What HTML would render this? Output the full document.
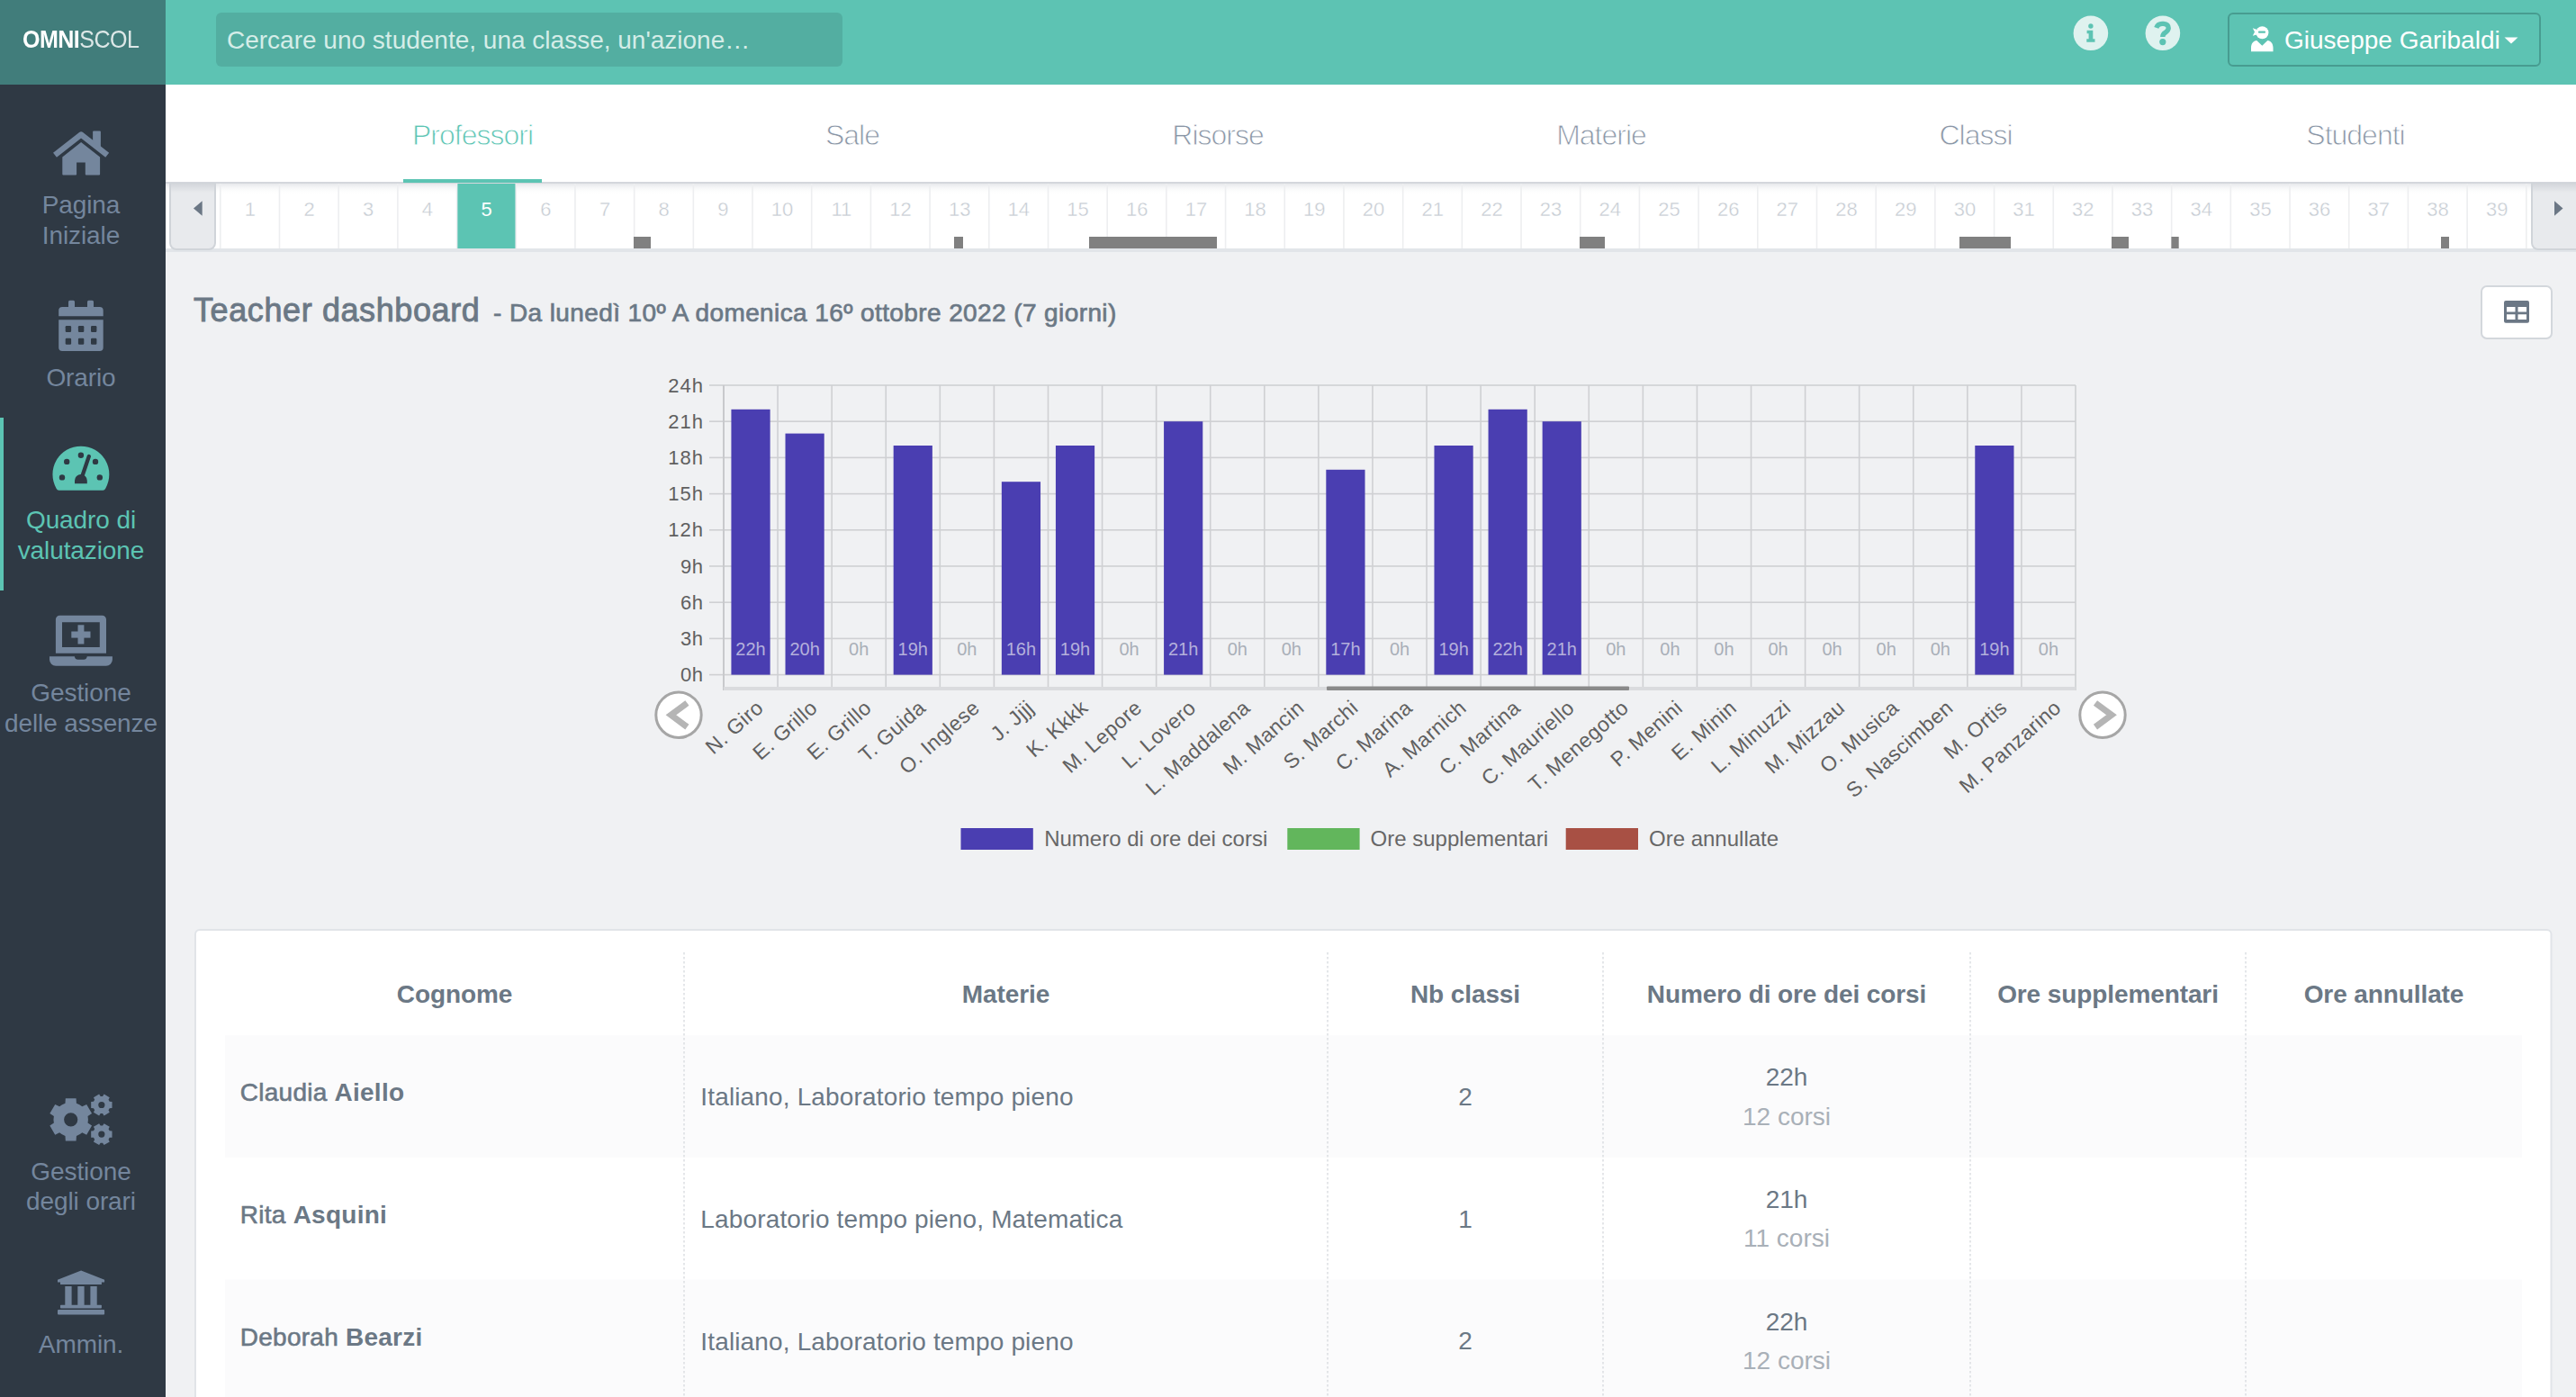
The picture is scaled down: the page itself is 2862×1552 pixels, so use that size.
<!DOCTYPE html><html><head><meta charset="utf-8"><style>
*{margin:0;padding:0;box-sizing:border-box}
html,body{width:2862px;height:1552px;overflow:hidden;background:#F0F1F3;font-family:"Liberation Sans",sans-serif}
.a{position:absolute}
.t{position:absolute;white-space:nowrap}
#sidebar{position:absolute;left:0;top:0;width:184px;height:1552px;background:#2F3944}
#logo{position:absolute;left:0;top:0;width:184px;height:94px;background:#417D7B}
#header{position:absolute;left:184px;top:0;width:2678px;height:94px;background:#5DC3B3}
#search{position:absolute;left:240px;top:14px;width:696px;height:60px;background:#53AEA1;border-radius:6px}
#userbtn{position:absolute;left:2475px;top:14px;width:348px;height:60px;border:2px solid #479C90;border-radius:6px}
#tabs{position:absolute;left:184px;top:94px;width:2678px;height:110px;background:#fff;border-bottom:2px solid #D4D7DC}
#weeks{position:absolute;left:184px;top:204px;width:2678px;height:72px;background:#fff}
#weeksb{position:absolute;left:184px;top:276px;width:2678px;height:4px;background:#E2E5E9}
svg{position:absolute;left:0;top:0}
</style></head><body><div id="sidebar"></div><div id="logo"></div><div id="header"></div><div id="search"></div><div id="userbtn"></div><div id="tabs"></div><div id="weeks"></div><div id="weeksb"></div><div class="t" style="left:25px;top:30px;font-size:28px;line-height:28px;color:#fff;letter-spacing:-0.6px;transform:scaleX(0.895);transform-origin:0 0;filter:blur(0.5px)"><b>OMNI</b><span style="color:rgba(255,255,255,0.82)">SCOL</span></div><div class="t " style="left:252.0px;top:30.6px;font-size:28px;line-height:28px;color:#D5EDE8;">Cercare uno studente, una classe, un'azione&hellip;</div><div class="t " style="left:2538.0px;top:30.8px;font-size:28px;line-height:28px;color:#fff;">Giuseppe Garibaldi</div><div class="t " style="left:90.0px;top:213.9px;font-size:28px;line-height:28px;color:#74869D;letter-spacing:-0.1px;transform:translateX(-50%);">Pagina</div><div class="t " style="left:90.0px;top:248.1px;font-size:28px;line-height:28px;color:#74869D;letter-spacing:-0.1px;transform:translateX(-50%);">Iniziale</div><div class="t " style="left:90.0px;top:406.3px;font-size:28px;line-height:28px;color:#74869D;letter-spacing:-0.1px;transform:translateX(-50%);">Orario</div><div class="t " style="left:90.0px;top:564.1px;font-size:28px;line-height:28px;color:#5CC4B3;letter-spacing:-0.1px;transform:translateX(-50%);">Quadro di</div><div class="t " style="left:90.0px;top:598.1px;font-size:28px;line-height:28px;color:#5CC4B3;letter-spacing:-0.1px;transform:translateX(-50%);">valutazione</div><div class="t " style="left:90.0px;top:756.4px;font-size:28px;line-height:28px;color:#74869D;letter-spacing:-0.1px;transform:translateX(-50%);">Gestione</div><div class="t " style="left:90.0px;top:789.9px;font-size:28px;line-height:28px;color:#74869D;letter-spacing:-0.1px;transform:translateX(-50%);">delle assenze</div><div class="t " style="left:90.0px;top:1287.6px;font-size:28px;line-height:28px;color:#74869D;letter-spacing:-0.1px;transform:translateX(-50%);">Gestione</div><div class="t " style="left:90.0px;top:1320.9px;font-size:28px;line-height:28px;color:#74869D;letter-spacing:-0.1px;transform:translateX(-50%);">degli orari</div><div class="t " style="left:90.0px;top:1479.9px;font-size:28px;line-height:28px;color:#74869D;letter-spacing:-0.1px;transform:translateX(-50%);">Ammin.</div><div class="t " style="left:525.0px;top:134.1px;font-size:32px;line-height:32px;color:#5CC4B3;letter-spacing:-1px;transform:translateX(-50%);-webkit-text-stroke:0.9px #fff;">Professori</div><div class="t " style="left:947.0px;top:134.1px;font-size:32px;line-height:32px;color:#8A96A6;letter-spacing:-1px;transform:translateX(-50%);-webkit-text-stroke:0.9px #fff;">Sale</div><div class="t " style="left:1353.0px;top:134.1px;font-size:32px;line-height:32px;color:#8A96A6;letter-spacing:-1px;transform:translateX(-50%);-webkit-text-stroke:0.9px #fff;">Risorse</div><div class="t " style="left:1779.0px;top:134.1px;font-size:32px;line-height:32px;color:#8A96A6;letter-spacing:-1px;transform:translateX(-50%);-webkit-text-stroke:0.9px #fff;">Materie</div><div class="t " style="left:2195.0px;top:134.1px;font-size:32px;line-height:32px;color:#8A96A6;letter-spacing:-1px;transform:translateX(-50%);-webkit-text-stroke:0.9px #fff;">Classi</div><div class="t " style="left:2617.0px;top:134.1px;font-size:32px;line-height:32px;color:#8A96A6;letter-spacing:-1px;transform:translateX(-50%);-webkit-text-stroke:0.9px #fff;">Studenti</div><svg width="2862" height="1552" viewBox="0 0 2862 1552"><rect x="0" y="464" width="4" height="192" fill="#5CC4B3"/><polyline points="61,172.3 90.1,149.5 119.2,172.3" fill="none" stroke="#74869D" stroke-width="6.4" stroke-linejoin="round"/><path d="M104.1,145.5 h6.8 a1,1 0 0 1 1,1 V163.5 L103.1,157.5 V146.5 a1,1 0 0 1 1,-1 z" fill="#74869D"/><path fill-rule="evenodd" d="M90.1,158 L111.1,174.6 V193.6 a1,1 0 0 1 -1,1 H95.8 a1,1 0 0 1 -1,-1 V180.6 H85.1 V193.6 a1,1 0 0 1 -1,1 H70.3 a1,1 0 0 1 -1,-1 V174.6 Z" fill="#74869D"/><rect x="76" y="333.8" width="7" height="12" rx="1.5" fill="#74869D"/><rect x="97" y="333.8" width="7" height="12" rx="1.5" fill="#74869D"/><path d="M65.2,351.3 V345 a4,4 0 0 1 4,-4 H110.7 a4,4 0 0 1 4,4 V351.3 Z" fill="#74869D"/><path d="M65.2,355.2 H114.7 V386 a4,4 0 0 1 -4,4 H69.2 a4,4 0 0 1 -4,-4 Z" fill="#74869D"/><rect x="72.7" y="362" width="6.4" height="6.9" rx="1.2" fill="#2F3944"/><rect x="72.7" y="375.8" width="6.4" height="6.9" rx="1.2" fill="#2F3944"/><rect x="86.9" y="362" width="6.4" height="6.9" rx="1.2" fill="#2F3944"/><rect x="86.9" y="375.8" width="6.4" height="6.9" rx="1.2" fill="#2F3944"/><rect x="101" y="362" width="6.4" height="6.9" rx="1.2" fill="#2F3944"/><rect x="101" y="375.8" width="6.4" height="6.9" rx="1.2" fill="#2F3944"/><path d="M65.5,544.7 Q63.5,544.7 62.6,542.7 A31.45,31.45 0 1 1 117.2,542.7 Q116.3,544.7 114.3,544.7 Z" fill="#5CC4B3"/><circle cx="74.2" cy="512.9" r="3.2" fill="#2F3944"/><circle cx="89.9" cy="505.8" r="3.2" fill="#2F3944"/><circle cx="106" cy="512.9" r="3.2" fill="#2F3944"/><circle cx="69" cy="530.4" r="3.2" fill="#2F3944"/><circle cx="110.8" cy="530.4" r="3.2" fill="#2F3944"/><line x1="90" y1="533" x2="98.8" y2="507" stroke="#2F3944" stroke-width="4.3" stroke-linecap="round"/><path d="M83,537.2 V534 A6.9,6.9 0 0 1 96.8,534 V537.2 Z" fill="#2F3944"/><path fill-rule="evenodd" d="M61.9,725.8 V688.3 a4.6,4.6 0 0 1 4.6,-4.6 H113.4 a4.6,4.6 0 0 1 4.6,4.6 V725.8 Z M69,691.2 V718.9 H110.8 V691.2 Z" fill="#74869D"/><rect x="86.5" y="694.3" width="6.9" height="21.2" fill="#74869D"/><rect x="79.3" y="701.5" width="21.2" height="7.1" fill="#74869D"/><path d="M55,729.2 H82.8 Q83.5,732.7 86.5,732.7 H93 Q96,732.7 96.8,729.2 H124.9 V732.8 a7,7 0 0 1 -7,7 H62 a7,7 0 0 1 -7,-7 Z" fill="#74869D"/><path fill-rule="evenodd" d="M84.92,1225.64 L84.58,1220.22 L72.82,1220.22 L72.48,1225.64 A19.20,19.20 0 0 0 66.08,1229.33 L61.22,1226.92 L55.34,1237.10 L59.86,1240.10 A19.20,19.20 0 0 0 59.86,1247.50 L55.34,1250.50 L61.22,1260.68 L66.08,1258.27 A19.20,19.20 0 0 0 72.48,1261.96 L72.82,1267.38 L84.58,1267.38 L84.92,1261.96 A19.20,19.20 0 0 0 91.32,1258.27 L96.18,1260.68 L102.06,1250.50 L97.54,1247.50 A19.20,19.20 0 0 0 97.54,1240.10 L102.06,1237.10 L96.18,1226.92 L91.32,1229.33 A19.20,19.20 0 0 0 84.92,1225.64 Z M86.30,1243.80 A7.60,7.60 0 1 0 71.10,1243.80 A7.60,7.60 0 1 0 86.30,1243.80 Z" fill="#74869D"/><path fill-rule="evenodd" d="M121.69,1231.24 L124.52,1231.07 L124.52,1223.93 L121.69,1223.76 A9.60,9.60 0 0 0 120.51,1221.72 L121.77,1219.18 L115.59,1215.61 L114.03,1217.97 A9.60,9.60 0 0 0 111.67,1217.97 L110.11,1215.61 L103.93,1219.18 L105.19,1221.72 A9.60,9.60 0 0 0 104.01,1223.76 L101.18,1223.93 L101.18,1231.07 L104.01,1231.24 A9.60,9.60 0 0 0 105.19,1233.28 L103.93,1235.82 L110.11,1239.39 L111.67,1237.03 A9.60,9.60 0 0 0 114.03,1237.03 L115.59,1239.39 L121.77,1235.82 L120.51,1233.28 A9.60,9.60 0 0 0 121.69,1231.24 Z M116.45,1227.50 A3.60,3.60 0 1 0 109.25,1227.50 A3.60,3.60 0 1 0 116.45,1227.50 Z" fill="#74869D"/><path fill-rule="evenodd" d="M121.69,1263.84 L124.52,1263.67 L124.52,1256.53 L121.69,1256.36 A9.60,9.60 0 0 0 120.51,1254.32 L121.77,1251.78 L115.59,1248.21 L114.03,1250.57 A9.60,9.60 0 0 0 111.67,1250.57 L110.11,1248.21 L103.93,1251.78 L105.19,1254.32 A9.60,9.60 0 0 0 104.01,1256.36 L101.18,1256.53 L101.18,1263.67 L104.01,1263.84 A9.60,9.60 0 0 0 105.19,1265.88 L103.93,1268.42 L110.11,1271.99 L111.67,1269.63 A9.60,9.60 0 0 0 114.03,1269.63 L115.59,1271.99 L121.77,1268.42 L120.51,1265.88 A9.60,9.60 0 0 0 121.69,1263.84 Z M116.45,1260.10 A3.60,3.60 0 1 0 109.25,1260.10 A3.60,3.60 0 1 0 116.45,1260.10 Z" fill="#74869D"/><path d="M90.1,1411.5 L116.1,1421.8 V1424.5 H112.9 V1427 H67 V1424.5 H64 V1421.8 Z" fill="#74869D"/><rect x="72.3" y="1429" width="7.3" height="21" fill="#74869D"/><rect x="86.3" y="1429" width="7.3" height="21" fill="#74869D"/><rect x="100.4" y="1429" width="7.3" height="21" fill="#74869D"/><rect x="67" y="1449.8" width="45.9" height="3.8" rx="0.8" fill="#74869D"/><rect x="64" y="1455.1" width="52.1" height="5.5" rx="1" fill="#74869D"/><circle cx="2322.9" cy="36.8" r="19.3" fill="#DFF2EF"/><circle cx="2402.9" cy="36.8" r="19.3" fill="#DFF2EF"/><circle cx="2322.9" cy="29" r="2.7" fill="#5DC3B3"/><path d="M2318.6,33.8 H2325.3 V43.2 H2327.5 V46.7 H2318.3 V43.2 H2320.6 V37.3 H2318.6 Z" fill="#5DC3B3"/><path d="M2395.8,30.8 Q2397.5,25.8 2403.6,26.4 Q2409.3,27 2409.2,31.3 Q2409.1,34.2 2405.5,36.3 Q2402.8,37.8 2402.8,41" fill="none" stroke="#5DC3B3" stroke-width="5.4" stroke-linejoin="round"/><circle cx="2402.8" cy="46.6" r="3.6" fill="#5DC3B3"/><circle cx="2513.4" cy="36.2" r="7" fill="#fff"/><rect x="2508.9" y="34.6" width="8.2" height="2.2" rx="1.1" fill="#5DC3B3"/><path d="M2507.2,32.8 L2502.8,31.2 L2505,35.5 L2502.8,39.8 L2507.2,38.6 Z" fill="#fff"/><path d="M2501,57.3 V53 C2501,48.5 2503.5,45.5 2507.3,45 L2513.3,50.8 L2519.3,45 C2523,45.5 2525.5,48.5 2525.5,53 V57.3 Z" fill="#fff"/><path d="M2782.5,41.5 H2797.5 L2790,48.5 Z" fill="#fff"/><rect x="448" y="199" width="154" height="4" fill="#5CC4B3"/><defs><linearGradient id="wsh" x1="0" y1="0" x2="0" y2="1"><stop offset="0" stop-color="#E6E8EB"/><stop offset="1" stop-color="#FFFFFF" stop-opacity="0"/></linearGradient><linearGradient id="bsh" x1="0" y1="0" x2="0" y2="1"><stop offset="0" stop-color="#D3D6DB"/><stop offset="1" stop-color="#E8EAED"/></linearGradient></defs><rect x="184" y="204" width="2678" height="12" fill="url(#wsh)"/><rect x="507.77" y="204" width="65.69" height="72" fill="#5CC4B3"/><rect x="244.00" y="204" width="1.6" height="72" fill="#EDEEF0"/><rect x="309.69" y="204" width="1.6" height="72" fill="#EDEEF0"/><rect x="375.38" y="204" width="1.6" height="72" fill="#EDEEF0"/><rect x="441.08" y="204" width="1.6" height="72" fill="#EDEEF0"/><rect x="506.77" y="204" width="1.6" height="72" fill="#EDEEF0"/><rect x="572.46" y="204" width="1.6" height="72" fill="#EDEEF0"/><rect x="638.15" y="204" width="1.6" height="72" fill="#EDEEF0"/><rect x="703.85" y="204" width="1.6" height="72" fill="#EDEEF0"/><rect x="769.54" y="204" width="1.6" height="72" fill="#EDEEF0"/><rect x="835.23" y="204" width="1.6" height="72" fill="#EDEEF0"/><rect x="900.92" y="204" width="1.6" height="72" fill="#EDEEF0"/><rect x="966.62" y="204" width="1.6" height="72" fill="#EDEEF0"/><rect x="1032.31" y="204" width="1.6" height="72" fill="#EDEEF0"/><rect x="1098.00" y="204" width="1.6" height="72" fill="#EDEEF0"/><rect x="1163.69" y="204" width="1.6" height="72" fill="#EDEEF0"/><rect x="1229.38" y="204" width="1.6" height="72" fill="#EDEEF0"/><rect x="1295.08" y="204" width="1.6" height="72" fill="#EDEEF0"/><rect x="1360.77" y="204" width="1.6" height="72" fill="#EDEEF0"/><rect x="1426.46" y="204" width="1.6" height="72" fill="#EDEEF0"/><rect x="1492.15" y="204" width="1.6" height="72" fill="#EDEEF0"/><rect x="1557.85" y="204" width="1.6" height="72" fill="#EDEEF0"/><rect x="1623.54" y="204" width="1.6" height="72" fill="#EDEEF0"/><rect x="1689.23" y="204" width="1.6" height="72" fill="#EDEEF0"/><rect x="1754.92" y="204" width="1.6" height="72" fill="#EDEEF0"/><rect x="1820.62" y="204" width="1.6" height="72" fill="#EDEEF0"/><rect x="1886.31" y="204" width="1.6" height="72" fill="#EDEEF0"/><rect x="1952.00" y="204" width="1.6" height="72" fill="#EDEEF0"/><rect x="2017.69" y="204" width="1.6" height="72" fill="#EDEEF0"/><rect x="2083.38" y="204" width="1.6" height="72" fill="#EDEEF0"/><rect x="2149.08" y="204" width="1.6" height="72" fill="#EDEEF0"/><rect x="2214.77" y="204" width="1.6" height="72" fill="#EDEEF0"/><rect x="2280.46" y="204" width="1.6" height="72" fill="#EDEEF0"/><rect x="2346.15" y="204" width="1.6" height="72" fill="#EDEEF0"/><rect x="2411.85" y="204" width="1.6" height="72" fill="#EDEEF0"/><rect x="2477.54" y="204" width="1.6" height="72" fill="#EDEEF0"/><rect x="2543.23" y="204" width="1.6" height="72" fill="#EDEEF0"/><rect x="2608.92" y="204" width="1.6" height="72" fill="#EDEEF0"/><rect x="2674.62" y="204" width="1.6" height="72" fill="#EDEEF0"/><rect x="2740.31" y="204" width="1.6" height="72" fill="#EDEEF0"/><rect x="2806.00" y="204" width="1.6" height="72" fill="#EDEEF0"/><rect x="704" y="263" width="19.0" height="13" fill="#808080"/><rect x="1060" y="263" width="10.0" height="13" fill="#808080"/><rect x="1210" y="263" width="142.0" height="13" fill="#808080"/><rect x="1755" y="263" width="28.0" height="13" fill="#808080"/><rect x="2177" y="263" width="57.0" height="13" fill="#808080"/><rect x="2346" y="263" width="19.0" height="13" fill="#808080"/><rect x="2412.4" y="263" width="8.3" height="13" fill="#808080"/><rect x="2712" y="263" width="9.0" height="13" fill="#808080"/><path d="M189,204 V270 a7,7 0 0 0 7,7 H232 a7,7 0 0 0 7,-7 V204 Z" fill="#E8EAED" stroke="#D0D4D9" stroke-width="2"/><rect x="190" y="204" width="48" height="10" fill="url(#bsh)"/><path d="M224.7,223.3 V239.7 L215,231.5 Z" fill="#6B7785"/><path d="M2813,204 V270 a7,7 0 0 0 7,7 H2870 V204 Z" fill="#E8EAED" stroke="#D0D4D9" stroke-width="2"/><rect x="2814" y="204" width="48" height="10" fill="url(#bsh)"/><path d="M2838,223.3 V239.7 L2847.5,231.5 Z" fill="#6B7785"/><rect x="2757" y="318" width="78" height="58" rx="6" fill="#fff" stroke="#D3D7DC" stroke-width="2"/><path fill-rule="evenodd" d="M2784,334.1 H2808 a2,2 0 0 1 2,2 V356.7 a2,2 0 0 1 -2,2 H2784 a2,2 0 0 1 -2,-2 V336.1 a2,2 0 0 1 2,-2 Z M2785,341 H2794.5 V346.5 H2785 Z M2797.5,341 H2807 V346.5 H2797.5 Z M2785,349.3 H2794.5 V355 H2785 Z M2797.5,349.3 H2807 V355 H2797.5 Z" fill="#6B7785"/><rect x="788" y="748.80" width="1518" height="1.6" fill="#CFD0D3"/><rect x="788" y="708.60" width="1518" height="1.6" fill="#CFD0D3"/><rect x="788" y="668.40" width="1518" height="1.6" fill="#CFD0D3"/><rect x="788" y="628.20" width="1518" height="1.6" fill="#CFD0D3"/><rect x="788" y="588.00" width="1518" height="1.6" fill="#CFD0D3"/><rect x="788" y="547.80" width="1518" height="1.6" fill="#CFD0D3"/><rect x="788" y="507.60" width="1518" height="1.6" fill="#CFD0D3"/><rect x="788" y="467.40" width="1518" height="1.6" fill="#CFD0D3"/><rect x="788" y="427.20" width="1518" height="1.6" fill="#CFD0D3"/><rect x="803.20" y="428" width="1.6" height="339" fill="#CFD0D3"/><rect x="863.28" y="428" width="1.6" height="339" fill="#CFD0D3"/><rect x="923.36" y="428" width="1.6" height="339" fill="#CFD0D3"/><rect x="983.44" y="428" width="1.6" height="339" fill="#CFD0D3"/><rect x="1043.52" y="428" width="1.6" height="339" fill="#CFD0D3"/><rect x="1103.60" y="428" width="1.6" height="339" fill="#CFD0D3"/><rect x="1163.68" y="428" width="1.6" height="339" fill="#CFD0D3"/><rect x="1223.76" y="428" width="1.6" height="339" fill="#CFD0D3"/><rect x="1283.84" y="428" width="1.6" height="339" fill="#CFD0D3"/><rect x="1343.92" y="428" width="1.6" height="339" fill="#CFD0D3"/><rect x="1404.00" y="428" width="1.6" height="339" fill="#CFD0D3"/><rect x="1464.08" y="428" width="1.6" height="339" fill="#CFD0D3"/><rect x="1524.16" y="428" width="1.6" height="339" fill="#CFD0D3"/><rect x="1584.24" y="428" width="1.6" height="339" fill="#CFD0D3"/><rect x="1644.32" y="428" width="1.6" height="339" fill="#CFD0D3"/><rect x="1704.40" y="428" width="1.6" height="339" fill="#CFD0D3"/><rect x="1764.48" y="428" width="1.6" height="339" fill="#CFD0D3"/><rect x="1824.56" y="428" width="1.6" height="339" fill="#CFD0D3"/><rect x="1884.64" y="428" width="1.6" height="339" fill="#CFD0D3"/><rect x="1944.72" y="428" width="1.6" height="339" fill="#CFD0D3"/><rect x="2004.80" y="428" width="1.6" height="339" fill="#CFD0D3"/><rect x="2064.88" y="428" width="1.6" height="339" fill="#CFD0D3"/><rect x="2124.96" y="428" width="1.6" height="339" fill="#CFD0D3"/><rect x="2185.04" y="428" width="1.6" height="339" fill="#CFD0D3"/><rect x="2245.12" y="428" width="1.6" height="339" fill="#CFD0D3"/><rect x="2305.20" y="428" width="1.6" height="339" fill="#CFD0D3"/><rect x="803" y="428" width="2" height="339" fill="#C8C9CC"/><rect x="804" y="763" width="1502" height="4" fill="#DADBDE"/><rect x="812.44" y="454.80" width="43.2" height="294.80" fill="#4A3EB1"/><text x="834.04" y="727.5" font-size="20" fill="#B4B0DC" text-anchor="middle" font-family="Liberation Sans">22h</text><rect x="872.52" y="481.60" width="43.2" height="268.00" fill="#4A3EB1"/><text x="894.12" y="727.5" font-size="20" fill="#B4B0DC" text-anchor="middle" font-family="Liberation Sans">20h</text><text x="954.20" y="727.5" font-size="20" fill="#A9AFB8" text-anchor="middle" font-family="Liberation Sans">0h</text><rect x="992.68" y="495.00" width="43.2" height="254.60" fill="#4A3EB1"/><text x="1014.28" y="727.5" font-size="20" fill="#B4B0DC" text-anchor="middle" font-family="Liberation Sans">19h</text><text x="1074.36" y="727.5" font-size="20" fill="#A9AFB8" text-anchor="middle" font-family="Liberation Sans">0h</text><rect x="1112.84" y="535.20" width="43.2" height="214.40" fill="#4A3EB1"/><text x="1134.44" y="727.5" font-size="20" fill="#B4B0DC" text-anchor="middle" font-family="Liberation Sans">16h</text><rect x="1172.92" y="495.00" width="43.2" height="254.60" fill="#4A3EB1"/><text x="1194.52" y="727.5" font-size="20" fill="#B4B0DC" text-anchor="middle" font-family="Liberation Sans">19h</text><text x="1254.60" y="727.5" font-size="20" fill="#A9AFB8" text-anchor="middle" font-family="Liberation Sans">0h</text><rect x="1293.08" y="468.20" width="43.2" height="281.40" fill="#4A3EB1"/><text x="1314.68" y="727.5" font-size="20" fill="#B4B0DC" text-anchor="middle" font-family="Liberation Sans">21h</text><text x="1374.76" y="727.5" font-size="20" fill="#A9AFB8" text-anchor="middle" font-family="Liberation Sans">0h</text><text x="1434.84" y="727.5" font-size="20" fill="#A9AFB8" text-anchor="middle" font-family="Liberation Sans">0h</text><rect x="1473.32" y="521.80" width="43.2" height="227.80" fill="#4A3EB1"/><text x="1494.92" y="727.5" font-size="20" fill="#B4B0DC" text-anchor="middle" font-family="Liberation Sans">17h</text><text x="1555.00" y="727.5" font-size="20" fill="#A9AFB8" text-anchor="middle" font-family="Liberation Sans">0h</text><rect x="1593.48" y="495.00" width="43.2" height="254.60" fill="#4A3EB1"/><text x="1615.08" y="727.5" font-size="20" fill="#B4B0DC" text-anchor="middle" font-family="Liberation Sans">19h</text><rect x="1653.56" y="454.80" width="43.2" height="294.80" fill="#4A3EB1"/><text x="1675.16" y="727.5" font-size="20" fill="#B4B0DC" text-anchor="middle" font-family="Liberation Sans">22h</text><rect x="1713.64" y="468.20" width="43.2" height="281.40" fill="#4A3EB1"/><text x="1735.24" y="727.5" font-size="20" fill="#B4B0DC" text-anchor="middle" font-family="Liberation Sans">21h</text><text x="1795.32" y="727.5" font-size="20" fill="#A9AFB8" text-anchor="middle" font-family="Liberation Sans">0h</text><text x="1855.40" y="727.5" font-size="20" fill="#A9AFB8" text-anchor="middle" font-family="Liberation Sans">0h</text><text x="1915.48" y="727.5" font-size="20" fill="#A9AFB8" text-anchor="middle" font-family="Liberation Sans">0h</text><text x="1975.56" y="727.5" font-size="20" fill="#A9AFB8" text-anchor="middle" font-family="Liberation Sans">0h</text><text x="2035.64" y="727.5" font-size="20" fill="#A9AFB8" text-anchor="middle" font-family="Liberation Sans">0h</text><text x="2095.72" y="727.5" font-size="20" fill="#A9AFB8" text-anchor="middle" font-family="Liberation Sans">0h</text><text x="2155.80" y="727.5" font-size="20" fill="#A9AFB8" text-anchor="middle" font-family="Liberation Sans">0h</text><rect x="2194.28" y="495.00" width="43.2" height="254.60" fill="#4A3EB1"/><text x="2215.88" y="727.5" font-size="20" fill="#B4B0DC" text-anchor="middle" font-family="Liberation Sans">19h</text><text x="2275.96" y="727.5" font-size="20" fill="#A9AFB8" text-anchor="middle" font-family="Liberation Sans">0h</text><rect x="1474" y="762.5" width="336" height="4.5" rx="1" fill="#8A8A8A"/><text x="781" y="757.10" font-size="22" fill="#606060" text-anchor="end" font-family="Liberation Sans" textLength="25" lengthAdjust="spacing">0h</text><text x="781" y="716.90" font-size="22" fill="#606060" text-anchor="end" font-family="Liberation Sans" textLength="25" lengthAdjust="spacing">3h</text><text x="781" y="676.70" font-size="22" fill="#606060" text-anchor="end" font-family="Liberation Sans" textLength="25" lengthAdjust="spacing">6h</text><text x="781" y="636.50" font-size="22" fill="#606060" text-anchor="end" font-family="Liberation Sans" textLength="25" lengthAdjust="spacing">9h</text><text x="781" y="596.30" font-size="22" fill="#606060" text-anchor="end" font-family="Liberation Sans" textLength="38.8" lengthAdjust="spacing">12h</text><text x="781" y="556.10" font-size="22" fill="#606060" text-anchor="end" font-family="Liberation Sans" textLength="38.8" lengthAdjust="spacing">15h</text><text x="781" y="515.90" font-size="22" fill="#606060" text-anchor="end" font-family="Liberation Sans" textLength="38.8" lengthAdjust="spacing">18h</text><text x="781" y="475.70" font-size="22" fill="#606060" text-anchor="end" font-family="Liberation Sans" textLength="38.8" lengthAdjust="spacing">21h</text><text x="781" y="435.50" font-size="22" fill="#606060" text-anchor="end" font-family="Liberation Sans" textLength="38.8" lengthAdjust="spacing">24h</text><text transform="translate(849.64,788.4) rotate(-41.5)" font-size="23" letter-spacing="0.5" fill="#606060" text-anchor="end" font-family="Liberation Sans">N. Giro</text><text transform="translate(909.72,788.4) rotate(-41.5)" font-size="23" letter-spacing="0.5" fill="#606060" text-anchor="end" font-family="Liberation Sans">E. Grillo</text><text transform="translate(969.80,788.4) rotate(-41.5)" font-size="23" letter-spacing="0.5" fill="#606060" text-anchor="end" font-family="Liberation Sans">E. Grillo</text><text transform="translate(1029.88,788.4) rotate(-41.5)" font-size="23" letter-spacing="0.5" fill="#606060" text-anchor="end" font-family="Liberation Sans">T. Guida</text><text transform="translate(1089.96,788.4) rotate(-41.5)" font-size="23" letter-spacing="0.5" fill="#606060" text-anchor="end" font-family="Liberation Sans">O. Inglese</text><text transform="translate(1150.04,788.4) rotate(-41.5)" font-size="23" letter-spacing="0.5" fill="#606060" text-anchor="end" font-family="Liberation Sans">J. Jjjj</text><text transform="translate(1210.12,788.4) rotate(-41.5)" font-size="23" letter-spacing="0.5" fill="#606060" text-anchor="end" font-family="Liberation Sans">K. Kkkk</text><text transform="translate(1270.20,788.4) rotate(-41.5)" font-size="23" letter-spacing="0.5" fill="#606060" text-anchor="end" font-family="Liberation Sans">M. Lepore</text><text transform="translate(1330.28,788.4) rotate(-41.5)" font-size="23" letter-spacing="0.5" fill="#606060" text-anchor="end" font-family="Liberation Sans">L. Lovero</text><text transform="translate(1390.36,788.4) rotate(-41.5)" font-size="23" letter-spacing="0.5" fill="#606060" text-anchor="end" font-family="Liberation Sans">L. Maddalena</text><text transform="translate(1450.44,788.4) rotate(-41.5)" font-size="23" letter-spacing="0.5" fill="#606060" text-anchor="end" font-family="Liberation Sans">M. Mancin</text><text transform="translate(1510.52,788.4) rotate(-41.5)" font-size="23" letter-spacing="0.5" fill="#606060" text-anchor="end" font-family="Liberation Sans">S. Marchi</text><text transform="translate(1570.60,788.4) rotate(-41.5)" font-size="23" letter-spacing="0.5" fill="#606060" text-anchor="end" font-family="Liberation Sans">C. Marina</text><text transform="translate(1630.68,788.4) rotate(-41.5)" font-size="23" letter-spacing="0.5" fill="#606060" text-anchor="end" font-family="Liberation Sans">A. Marnich</text><text transform="translate(1690.76,788.4) rotate(-41.5)" font-size="23" letter-spacing="0.5" fill="#606060" text-anchor="end" font-family="Liberation Sans">C. Martina</text><text transform="translate(1750.84,788.4) rotate(-41.5)" font-size="23" letter-spacing="0.5" fill="#606060" text-anchor="end" font-family="Liberation Sans">C. Mauriello</text><text transform="translate(1810.92,788.4) rotate(-41.5)" font-size="23" letter-spacing="0.5" fill="#606060" text-anchor="end" font-family="Liberation Sans">T. Menegotto</text><text transform="translate(1871.00,788.4) rotate(-41.5)" font-size="23" letter-spacing="0.5" fill="#606060" text-anchor="end" font-family="Liberation Sans">P. Menini</text><text transform="translate(1931.08,788.4) rotate(-41.5)" font-size="23" letter-spacing="0.5" fill="#606060" text-anchor="end" font-family="Liberation Sans">E. Minin</text><text transform="translate(1991.16,788.4) rotate(-41.5)" font-size="23" letter-spacing="0.5" fill="#606060" text-anchor="end" font-family="Liberation Sans">L. Minuzzi</text><text transform="translate(2051.24,788.4) rotate(-41.5)" font-size="23" letter-spacing="0.5" fill="#606060" text-anchor="end" font-family="Liberation Sans">M. Mizzau</text><text transform="translate(2111.32,788.4) rotate(-41.5)" font-size="23" letter-spacing="0.5" fill="#606060" text-anchor="end" font-family="Liberation Sans">O. Musica</text><text transform="translate(2171.40,788.4) rotate(-41.5)" font-size="23" letter-spacing="0.5" fill="#606060" text-anchor="end" font-family="Liberation Sans">S. Nascimben</text><text transform="translate(2231.48,788.4) rotate(-41.5)" font-size="23" letter-spacing="0.5" fill="#606060" text-anchor="end" font-family="Liberation Sans">M. Ortis</text><text transform="translate(2291.56,788.4) rotate(-41.5)" font-size="23" letter-spacing="0.5" fill="#606060" text-anchor="end" font-family="Liberation Sans">M. Panzarino</text><circle cx="754" cy="794.3" r="25.2" fill="#fff" stroke="#A6A6A6" stroke-width="3"/><path d="M763.4,781 L745.5,794.3 L763.4,807.6" fill="none" stroke="#B5B5B5" stroke-width="7" stroke-linejoin="miter"/><circle cx="2336" cy="794.3" r="25.2" fill="#fff" stroke="#A6A6A6" stroke-width="3"/><path d="M2328,781 L2346,794.3 L2328,807.6" fill="none" stroke="#B5B5B5" stroke-width="7" stroke-linejoin="miter"/><rect x="1067.5" y="920" width="80.3" height="24" fill="#4A3EB1"/><text x="1160.2" y="940.1" font-size="24" fill="#676767" font-family="Liberation Sans">Numero di ore dei corsi</text><rect x="1430.3" y="920" width="80.3" height="24" fill="#62B65C"/><text x="1522.6" y="940.1" font-size="24" fill="#676767" font-family="Liberation Sans">Ore supplementari</text><rect x="1739.7" y="920" width="80.3" height="24" fill="#A85044"/><text x="1832" y="940.1" font-size="24" fill="#676767" font-family="Liberation Sans">Ore annullate</text><rect x="217" y="1033" width="2617.5" height="600" rx="5" fill="#fff" stroke="#E1E4E8" stroke-width="2"/><rect x="250" y="1150.3" width="2552" height="135.5" fill="#FBFBFC"/><rect x="250" y="1421.6" width="2552" height="138.4" fill="#FBFBFC"/><line x1="760" y1="1058" x2="760" y2="1552" stroke="#D6D9DD" stroke-width="1.3" stroke-dasharray="2.5,2.5"/><line x1="1475" y1="1058" x2="1475" y2="1552" stroke="#D6D9DD" stroke-width="1.3" stroke-dasharray="2.5,2.5"/><line x1="1781" y1="1058" x2="1781" y2="1552" stroke="#D6D9DD" stroke-width="1.3" stroke-dasharray="2.5,2.5"/><line x1="2189" y1="1058" x2="2189" y2="1552" stroke="#D6D9DD" stroke-width="1.3" stroke-dasharray="2.5,2.5"/><line x1="2495" y1="1058" x2="2495" y2="1552" stroke="#D6D9DD" stroke-width="1.3" stroke-dasharray="2.5,2.5"/></svg><div class="t " style="left:277.8px;top:222.1px;font-size:22px;line-height:22px;color:#C5CBD2;transform:translateX(-50%);-webkit-text-stroke:0.4px #fff;">1</div><div class="t " style="left:343.5px;top:222.1px;font-size:22px;line-height:22px;color:#C5CBD2;transform:translateX(-50%);-webkit-text-stroke:0.4px #fff;">2</div><div class="t " style="left:409.2px;top:222.1px;font-size:22px;line-height:22px;color:#C5CBD2;transform:translateX(-50%);-webkit-text-stroke:0.4px #fff;">3</div><div class="t " style="left:474.9px;top:222.1px;font-size:22px;line-height:22px;color:#C5CBD2;transform:translateX(-50%);-webkit-text-stroke:0.4px #fff;">4</div><div class="t " style="left:540.6px;top:222.1px;font-size:22px;line-height:22px;color:#FFFFFF;transform:translateX(-50%);">5</div><div class="t " style="left:606.3px;top:222.1px;font-size:22px;line-height:22px;color:#C5CBD2;transform:translateX(-50%);-webkit-text-stroke:0.4px #fff;">6</div><div class="t " style="left:672.0px;top:222.1px;font-size:22px;line-height:22px;color:#C5CBD2;transform:translateX(-50%);-webkit-text-stroke:0.4px #fff;">7</div><div class="t " style="left:737.7px;top:222.1px;font-size:22px;line-height:22px;color:#C5CBD2;transform:translateX(-50%);-webkit-text-stroke:0.4px #fff;">8</div><div class="t " style="left:803.4px;top:222.1px;font-size:22px;line-height:22px;color:#C5CBD2;transform:translateX(-50%);-webkit-text-stroke:0.4px #fff;">9</div><div class="t " style="left:869.1px;top:222.1px;font-size:22px;line-height:22px;color:#C5CBD2;transform:translateX(-50%);-webkit-text-stroke:0.4px #fff;">10</div><div class="t " style="left:934.8px;top:222.1px;font-size:22px;line-height:22px;color:#C5CBD2;transform:translateX(-50%);-webkit-text-stroke:0.4px #fff;">11</div><div class="t " style="left:1000.5px;top:222.1px;font-size:22px;line-height:22px;color:#C5CBD2;transform:translateX(-50%);-webkit-text-stroke:0.4px #fff;">12</div><div class="t " style="left:1066.2px;top:222.1px;font-size:22px;line-height:22px;color:#C5CBD2;transform:translateX(-50%);-webkit-text-stroke:0.4px #fff;">13</div><div class="t " style="left:1131.8px;top:222.1px;font-size:22px;line-height:22px;color:#C5CBD2;transform:translateX(-50%);-webkit-text-stroke:0.4px #fff;">14</div><div class="t " style="left:1197.5px;top:222.1px;font-size:22px;line-height:22px;color:#C5CBD2;transform:translateX(-50%);-webkit-text-stroke:0.4px #fff;">15</div><div class="t " style="left:1263.2px;top:222.1px;font-size:22px;line-height:22px;color:#C5CBD2;transform:translateX(-50%);-webkit-text-stroke:0.4px #fff;">16</div><div class="t " style="left:1328.9px;top:222.1px;font-size:22px;line-height:22px;color:#C5CBD2;transform:translateX(-50%);-webkit-text-stroke:0.4px #fff;">17</div><div class="t " style="left:1394.6px;top:222.1px;font-size:22px;line-height:22px;color:#C5CBD2;transform:translateX(-50%);-webkit-text-stroke:0.4px #fff;">18</div><div class="t " style="left:1460.3px;top:222.1px;font-size:22px;line-height:22px;color:#C5CBD2;transform:translateX(-50%);-webkit-text-stroke:0.4px #fff;">19</div><div class="t " style="left:1526.0px;top:222.1px;font-size:22px;line-height:22px;color:#C5CBD2;transform:translateX(-50%);-webkit-text-stroke:0.4px #fff;">20</div><div class="t " style="left:1591.7px;top:222.1px;font-size:22px;line-height:22px;color:#C5CBD2;transform:translateX(-50%);-webkit-text-stroke:0.4px #fff;">21</div><div class="t " style="left:1657.4px;top:222.1px;font-size:22px;line-height:22px;color:#C5CBD2;transform:translateX(-50%);-webkit-text-stroke:0.4px #fff;">22</div><div class="t " style="left:1723.1px;top:222.1px;font-size:22px;line-height:22px;color:#C5CBD2;transform:translateX(-50%);-webkit-text-stroke:0.4px #fff;">23</div><div class="t " style="left:1788.8px;top:222.1px;font-size:22px;line-height:22px;color:#C5CBD2;transform:translateX(-50%);-webkit-text-stroke:0.4px #fff;">24</div><div class="t " style="left:1854.5px;top:222.1px;font-size:22px;line-height:22px;color:#C5CBD2;transform:translateX(-50%);-webkit-text-stroke:0.4px #fff;">25</div><div class="t " style="left:1920.2px;top:222.1px;font-size:22px;line-height:22px;color:#C5CBD2;transform:translateX(-50%);-webkit-text-stroke:0.4px #fff;">26</div><div class="t " style="left:1985.8px;top:222.1px;font-size:22px;line-height:22px;color:#C5CBD2;transform:translateX(-50%);-webkit-text-stroke:0.4px #fff;">27</div><div class="t " style="left:2051.5px;top:222.1px;font-size:22px;line-height:22px;color:#C5CBD2;transform:translateX(-50%);-webkit-text-stroke:0.4px #fff;">28</div><div class="t " style="left:2117.2px;top:222.1px;font-size:22px;line-height:22px;color:#C5CBD2;transform:translateX(-50%);-webkit-text-stroke:0.4px #fff;">29</div><div class="t " style="left:2182.9px;top:222.1px;font-size:22px;line-height:22px;color:#C5CBD2;transform:translateX(-50%);-webkit-text-stroke:0.4px #fff;">30</div><div class="t " style="left:2248.6px;top:222.1px;font-size:22px;line-height:22px;color:#C5CBD2;transform:translateX(-50%);-webkit-text-stroke:0.4px #fff;">31</div><div class="t " style="left:2314.3px;top:222.1px;font-size:22px;line-height:22px;color:#C5CBD2;transform:translateX(-50%);-webkit-text-stroke:0.4px #fff;">32</div><div class="t " style="left:2380.0px;top:222.1px;font-size:22px;line-height:22px;color:#C5CBD2;transform:translateX(-50%);-webkit-text-stroke:0.4px #fff;">33</div><div class="t " style="left:2445.7px;top:222.1px;font-size:22px;line-height:22px;color:#C5CBD2;transform:translateX(-50%);-webkit-text-stroke:0.4px #fff;">34</div><div class="t " style="left:2511.4px;top:222.1px;font-size:22px;line-height:22px;color:#C5CBD2;transform:translateX(-50%);-webkit-text-stroke:0.4px #fff;">35</div><div class="t " style="left:2577.1px;top:222.1px;font-size:22px;line-height:22px;color:#C5CBD2;transform:translateX(-50%);-webkit-text-stroke:0.4px #fff;">36</div><div class="t " style="left:2642.8px;top:222.1px;font-size:22px;line-height:22px;color:#C5CBD2;transform:translateX(-50%);-webkit-text-stroke:0.4px #fff;">37</div><div class="t " style="left:2708.5px;top:222.1px;font-size:22px;line-height:22px;color:#C5CBD2;transform:translateX(-50%);-webkit-text-stroke:0.4px #fff;">38</div><div class="t " style="left:2774.2px;top:222.1px;font-size:22px;line-height:22px;color:#C5CBD2;transform:translateX(-50%);-webkit-text-stroke:0.4px #fff;">39</div><div class="t " style="left:215.0px;top:326.7px;font-size:36px;line-height:36px;color:#6B7885;letter-spacing:0.6px;-webkit-text-stroke:0.9px #6B7885;">Teacher dashboard</div><div class="t " style="left:548.0px;top:333.5px;font-size:28px;line-height:28px;color:#6B7885;letter-spacing:0.4px;-webkit-text-stroke:0.7px #6B7885;">- Da luned&igrave; 10&ordm; A domenica 16&ordm; ottobre 2022 (7 giorni)</div><div class="t " style="left:505.0px;top:1091.3px;font-size:28px;line-height:28px;color:#6B7885;font-weight:bold;letter-spacing:-0.1px;transform:translateX(-50%);">Cognome</div><div class="t " style="left:1117.5px;top:1091.3px;font-size:28px;line-height:28px;color:#6B7885;font-weight:bold;letter-spacing:-0.1px;transform:translateX(-50%);">Materie</div><div class="t " style="left:1628.0px;top:1091.3px;font-size:28px;line-height:28px;color:#6B7885;font-weight:bold;letter-spacing:-0.1px;transform:translateX(-50%);">Nb classi</div><div class="t " style="left:1985.0px;top:1091.3px;font-size:28px;line-height:28px;color:#6B7885;font-weight:bold;letter-spacing:-0.1px;transform:translateX(-50%);">Numero di ore dei corsi</div><div class="t " style="left:2342.0px;top:1091.3px;font-size:28px;line-height:28px;color:#6B7885;font-weight:bold;letter-spacing:-0.1px;transform:translateX(-50%);">Ore supplementari</div><div class="t " style="left:2648.5px;top:1091.3px;font-size:28px;line-height:28px;color:#6B7885;font-weight:bold;letter-spacing:-0.1px;transform:translateX(-50%);">Ore annullate</div><div class="t " style="left:266.8px;top:1200.0px;font-size:28px;line-height:28px;color:#6B7885;letter-spacing:0.25px;"><span style="-webkit-text-stroke:0.6px #6B7885">Claudia</span> <b>Aiello</b></div><div class="t " style="left:778.3px;top:1205.3px;font-size:28px;line-height:28px;color:#6B7885;letter-spacing:0.15px;">Italiano, Laboratorio tempo pieno</div><div class="t " style="left:1628.0px;top:1204.9px;font-size:28px;line-height:28px;color:#6B7885;transform:translateX(-50%);">2</div><div class="t " style="left:1985.0px;top:1183.3px;font-size:28px;line-height:28px;color:#6B7885;transform:translateX(-50%);">22h</div><div class="t " style="left:1985.0px;top:1226.7px;font-size:28px;line-height:28px;color:#A9B0B8;transform:translateX(-50%);">12 corsi</div><div class="t " style="left:266.8px;top:1335.7px;font-size:28px;line-height:28px;color:#6B7885;letter-spacing:0.25px;"><span style="-webkit-text-stroke:0.6px #6B7885">Rita</span> <b>Asquini</b></div><div class="t " style="left:778.3px;top:1341.0px;font-size:28px;line-height:28px;color:#6B7885;letter-spacing:0.15px;">Laboratorio tempo pieno, Matematica</div><div class="t " style="left:1628.0px;top:1340.6px;font-size:28px;line-height:28px;color:#6B7885;transform:translateX(-50%);">1</div><div class="t " style="left:1985.0px;top:1319.0px;font-size:28px;line-height:28px;color:#6B7885;transform:translateX(-50%);">21h</div><div class="t " style="left:1985.0px;top:1362.4px;font-size:28px;line-height:28px;color:#A9B0B8;transform:translateX(-50%);">11 corsi</div><div class="t " style="left:266.8px;top:1471.5px;font-size:28px;line-height:28px;color:#6B7885;letter-spacing:0.25px;"><span style="-webkit-text-stroke:0.6px #6B7885">Deborah</span> <b>Bearzi</b></div><div class="t " style="left:778.3px;top:1476.8px;font-size:28px;line-height:28px;color:#6B7885;letter-spacing:0.15px;">Italiano, Laboratorio tempo pieno</div><div class="t " style="left:1628.0px;top:1476.4px;font-size:28px;line-height:28px;color:#6B7885;transform:translateX(-50%);">2</div><div class="t " style="left:1985.0px;top:1454.8px;font-size:28px;line-height:28px;color:#6B7885;transform:translateX(-50%);">22h</div><div class="t " style="left:1985.0px;top:1498.2px;font-size:28px;line-height:28px;color:#A9B0B8;transform:translateX(-50%);">12 corsi</div></body></html>
